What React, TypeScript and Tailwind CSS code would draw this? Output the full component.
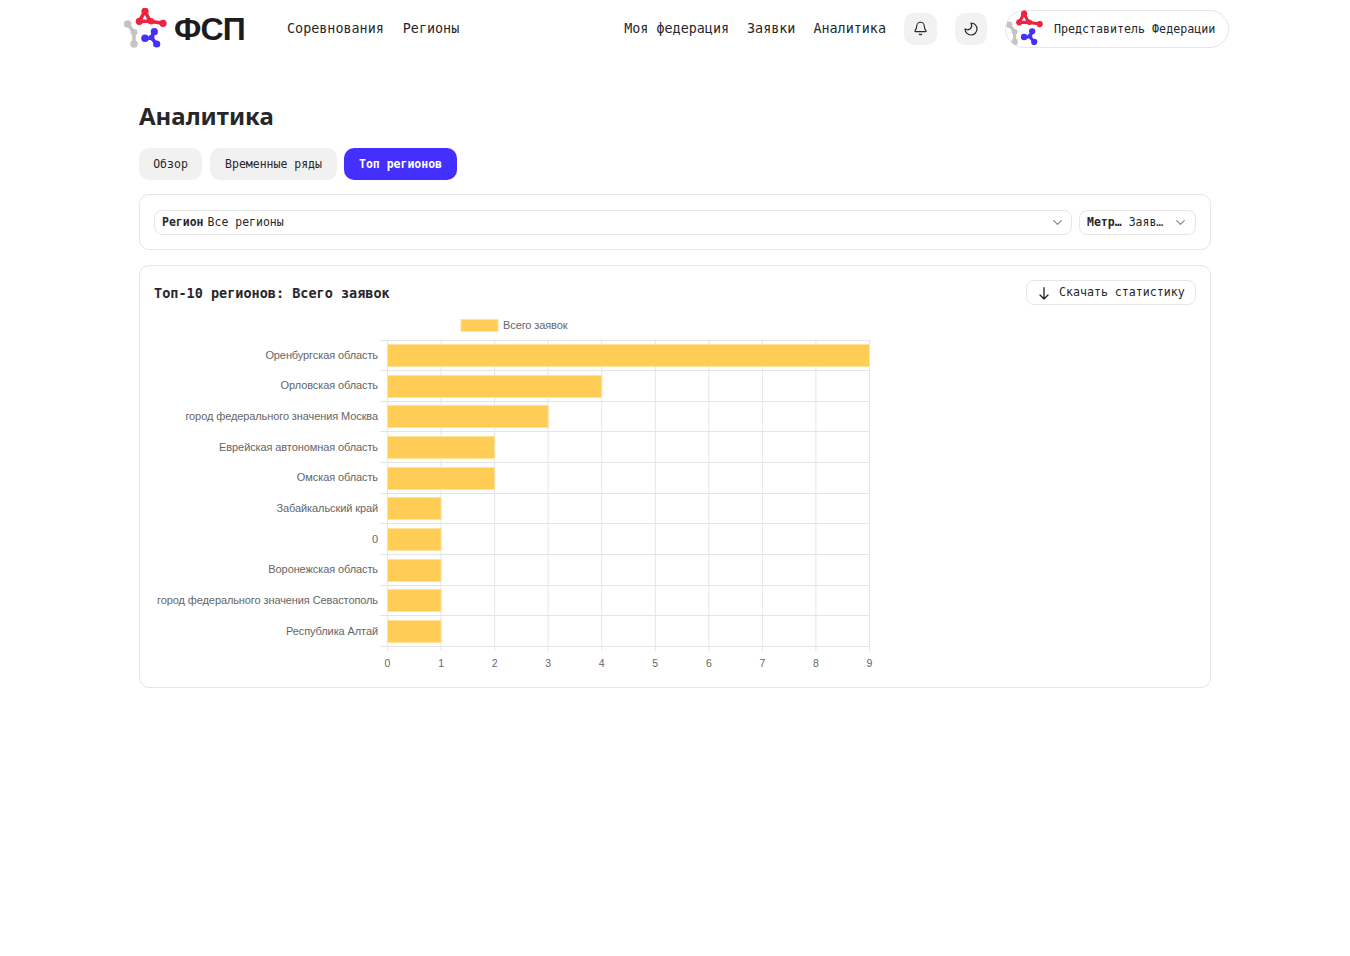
import React from 'react';
import { Bell, ChevronDown, Moon } from 'lucide-react';

const regions = [
  { name: 'Оренбургская область', value: 9 },
  { name: 'Орловская область', value: 4 },
  { name: 'город федерального значения Москва', value: 3 },
  { name: 'Еврейская автономная область', value: 2 },
  { name: 'Омская область', value: 2 },
  { name: 'Забайкальский край', value: 1 },
  { name: '0', value: 1 },
  { name: 'Воронежская область', value: 1 },
  { name: 'город федерального значения Севастополь', value: 1 },
  { name: 'Республика Алтай', value: 1 },
];

function LogoMark({ className }: { className: string }) {
  return (
    <svg viewBox="0 0 44 42" className={className}>
      <g fill="none" strokeWidth="3.6" strokeLinecap="round">
        <path d="M3.6 16L10 24.3V36" stroke="#c4c4c4" />
        <path d="M15.300 13.300L21 3L26 13.300L39 15.300M15.300 13.300H26" stroke="#ee2241" />
        <path d="M30.300 23.700L27.700 29.300M21 30.300L27.700 30.300L32.700 36" stroke="#4330ff" />
      </g>
      <g fill="#c4c4c4">
        <circle cx="3.600" cy="16" r="3.800" />
        <circle cx="10" cy="24.300" r="3.400" />
        <circle cx="10" cy="36" r="3.800" />
      </g>
      <g fill="#ee2241">
        <circle cx="21" cy="3.200" r="3.600" />
        <circle cx="15.300" cy="13.300" r="3.600" />
        <circle cx="27" cy="13.300" r="3.200" />
        <circle cx="39" cy="15.300" r="3.600" />
      </g>
      <g fill="#4330ff">
        <circle cx="30.300" cy="23.700" r="3.600" />
        <circle cx="21" cy="30.300" r="3.800" />
        <circle cx="27.700" cy="29.300" r="2.800" />
        <circle cx="32.700" cy="36" r="3.600" />
      </g>
    </svg>
  );
}

function RegionChart() {
  const x0 = 387.5;
  const step = 53.55;
  const top = 340.5;
  const band = 30.65;
  return (
    <svg width="760" height="375" viewBox="140 306 760 375" className="block" style={{ fontFamily: '"Liberation Sans", sans-serif' }}>
      <rect x="461" y="320.500" width="37" height="12" fill="#ffcd56" stroke="#ffe2a0" />
      <text x="503" y="329.500" fontSize="11" fill="#666" letterSpacing="-0.1">Всего заявок</text>
      {Array.from({ length: 10 }).map((_, i) => (
        <line key={i} x1={x0 + step * i} x2={x0 + step * i} y1={top} y2={top + band * 10 + 5} stroke="#e5e5e5" />
      ))}
      {Array.from({ length: 11 }).map((_, i) => (
        <line key={i} x1="380" x2={x0 + step * 9} y1={Math.round(top + band * i) + 0.5} y2={Math.round(top + band * i) + 0.5} stroke="#e5e5e5" />
      ))}
      {regions.map((r, i) => {
        const y = Math.round(top + band * i + 4.5) + 0.5;
        return (
          <g key={r.name}>
            <rect x={x0} y={y} width={step * r.value} height="22" fill="#ffcd56" stroke="#ffe2a0" />
            <text x="378" y={top + band * i + 19.300} textAnchor="end" fontSize="11" fill="#666" letterSpacing="-0.1">{r.name}</text>
          </g>
        );
      })}
      {Array.from({ length: 10 }).map((_, i) => (
        <text key={i} x={x0 + step * i} y="668" textAnchor="middle" fontSize="10.500" fill="#666">{i}</text>
      ))}
    </svg>
  );
}

export default function App() {
  return (
    <div className="min-h-[956px] bg-white text-[#27272a]" style={{ fontFamily: '"DejaVu Sans Mono", monospace' }}>
      <header className="flex h-[57px] items-center justify-between pl-[124px] pr-[121px]">
        <div className="flex items-center">
          <LogoMark className="h-[42px] w-11" />
          <span className="ml-[6px] text-[32px] font-bold leading-none tracking-[-0.8px] text-[#1c1c20]" style={{ fontFamily: '"Liberation Sans", sans-serif' }}>ФСП</span>
          <nav className="ml-[42px] flex gap-[19px] pt-[2px] text-[13.4px]">
            <a>Соревнования</a>
            <a>Регионы</a>
          </nav>
        </div>
        <div className="flex items-center">
          <nav className="flex gap-[18px] pt-[2px] text-[13.4px]">
            <a>Моя федерация</a>
            <a>Заявки</a>
            <a>Аналитика</a>
          </nav>
          <button className="ml-[18px] flex h-8 w-[33px] items-center justify-center rounded-[10px] bg-[#f2f2f2]">
            <Bell size={15} strokeWidth={1.8} />
          </button>
          <button className="ml-[18px] flex h-8 w-8 items-center justify-center rounded-[10px] bg-[#f2f2f2]">
            <Moon size={16} strokeWidth={1.8} className="-rotate-90" />
          </button>
          <div className="ml-[18px] flex h-[38px] w-[224px] items-center rounded-full border border-[#e6e6e6]">
            <div className="h-[38px] w-[38px] shrink-0 overflow-hidden rounded-full">
              <LogoMark className="h-[38px] w-[38px]" />
            </div>
            <span className="ml-[10px] whitespace-nowrap pt-[2px] text-[11.65px]">Представитель Федерации</span>
          </div>
        </div>
      </header>

      <main className="mx-[139px] w-[1072px] pt-[42px]">
        <h1 className="text-[24px] font-bold leading-[34px]" style={{ fontFamily: '"Noto Sans", sans-serif' }}>Аналитика</h1>
        <div className="mt-[15px] flex text-[11.5px]">
          <button className="h-8 w-[63px] rounded-[10px] bg-[#f1f1f1] pt-px">Обзор</button>
          <button className="ml-2 h-8 w-[127px] rounded-[10px] bg-[#f1f1f1] pt-px">Временные ряды</button>
          <button className="ml-[7px] h-8 w-[113px] rounded-[10px] bg-[#4330ff] pt-px font-bold text-white">Топ регионов</button>
        </div>

        <section className="mt-[14px] flex h-14 items-center gap-[7px] rounded-[10px] border border-[#e6e6e6] px-[14px] text-[11.5px]">
          <div className="flex h-[25px] flex-1 items-center justify-between rounded-lg border border-[#e6e6e6] pl-[7px] pr-[6px]">
            <span className="flex gap-1 pt-[2px]"><b>Регион</b> <span>Все регионы</span></span>
            <ChevronDown size={15} className="text-[#8a8a8f]" />
          </div>
          <div className="flex h-[25px] w-[117px] items-center justify-between rounded-lg border border-[#e6e6e6] px-[7px]">
            <span className="flex gap-[7px] whitespace-nowrap pt-[2px]"><b>Метр…</b> <span>Заяв…</span></span>
            <ChevronDown size={15} className="text-[#8a8a8f]" />
          </div>
        </section>

        <section className="mt-[15px] h-[423px] rounded-[10px] border border-[#e6e6e6]">
          <div className="flex items-center justify-between px-[14px] pt-[14px]">
            <h2 className="pt-[2px] text-[13.5px] font-bold">Топ-10 регионов: Всего заявок</h2>
            <button className="flex h-[25px] w-[170px] items-center gap-[7px] rounded-lg border border-[#e6e6e6] pl-[9px] text-[11.6px]">
              <svg viewBox="0 0 24 24" className="h-4 w-4" fill="none" stroke="currentColor" strokeWidth="2" strokeLinecap="round" strokeLinejoin="round">
                <path d="M12 4V21M6 15l6 6 6-6" />
              </svg>
              Скачать статистику
            </button>
          </div>
          <RegionChart />
        </section>
      </main>
    </div>
  );
}
